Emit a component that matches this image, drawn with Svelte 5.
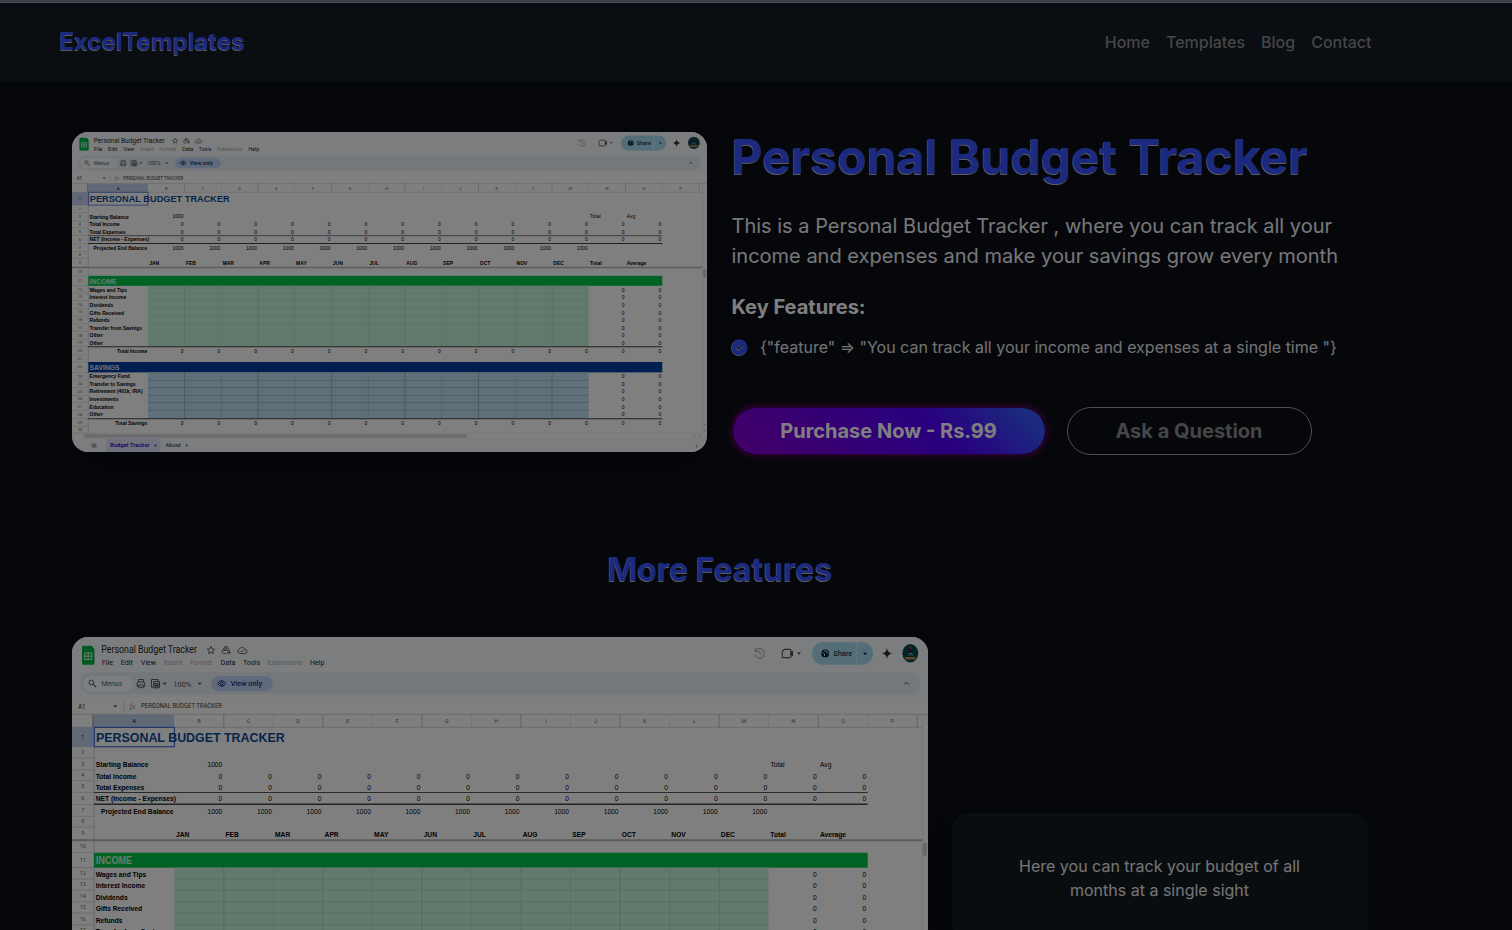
<script>
  const navItems = ['Home', 'Templates', 'Blog', 'Contact'];

  const colStart = 102.3;
  const colPitch = 49.53;
  const colX = (i) => colStart + i * colPitch;
  const letters = 'BCDEFGHIJKLMNOP'.split('');
  const months = ['JAN', 'FEB', 'MAR', 'APR', 'MAY', 'JUN', 'JUL', 'AUG', 'SEP', 'OCT', 'NOV', 'DEC', 'Total', 'Average'];
  const fourteen = Array.from({ length: 14 }, (_, i) => i);
  const twelve = fourteen.slice(0, 12);

  // bottom edge of every sheet row, starting with the column header
  const edges = [90.3, 109.7, 121, 133, 143.7, 155.3, 167.7, 179.3, 190, 202.8, 215.7, 230.6, 242, 253, 264.8, 276, 287.8, 299, 311, 322, 334.5, 345, 360.6, 372.5, 383.3, 395, 405.8, 417.5, 430, 441.5, 451.8];

  const labels = [
    ['Starting Balance', 127.3], ['Total Income', 139], ['Total Expenses', 150.5], ['NET (Income - Expenses)', 161],
    ['Wages and Tips', 237], ['Interest Income', 248.3], ['Dividends', 260], ['Gifts Received', 271.3], ['Refunds', 283],
    ['Transfer from Savings', 294.3], ['Other', 305.5], ['Other', 317],
    ['Emergency Fund', 366.5], ['Transfer to Savings', 378], ['Retirement (401k, IRA)', 389.5], ['Investments', 401],
    ['Education', 412.5], ['Other', 424]
  ];
  const rightLabels = [['Projected End Balance', 174.3], ['Total Income', 329], ['Total Savings', 436.5]];
  const zeroRows = [139, 150.5, 161, 329, 436.5];
  const sideRows = [237, 248.3, 260, 271.3, 283, 294.3, 305.5, 317, 366.5, 378, 389.5, 401, 412.5, 424];
  const menus = [
    ['File', 29.7, 11.3, 1], ['Edit', 48.7, 12.3, 1], ['View', 69, 15, 1], ['Insert', 91.5, 18.5, 0], ['Format', 118, 22, 0],
    ['Data', 148.5, 15, 1], ['Tools', 171, 17, 1], ['Extensions', 195.5, 34.5, 0], ['Help', 238, 14.5, 1]
  ];
  const carets = [[727, 16.5], [92.7, 46.7], [127.7, 46.7], [43.3, 69.3]];
  const tabCarets = [[112.5, 470.5, '#3a2bb0'], [154.5, 470.5, '#444746']];
</script>

{#snippet sheet()}
  <svg class="sheet" viewBox="0 0 856 480" preserveAspectRatio="none" role="img" aria-label="Personal Budget Tracker">
    <rect width="856" height="480" fill="#ffffff" />
    <rect width="856" height="60" fill="#f9fbfd" />

    <!-- title bar -->
    <path d="M11.5 8.7h8l3 4v13.5a1.5 1.5 0 0 1-1.5 1.5h-9.500a1.500 1.500 0 0 1-1.500-1.500v-16a1.500 1.500 0 0 1 1.500-1.500z" fill="#00b548" />
    <path d="M19.500 8.700l3 4h-3z" fill="#008a37" />
    <path d="M12.700 16h7v6.500h-7zM16.200 16v6.500M12.700 19.200h7" fill="none" stroke="#e6f5ea" stroke-width="1" />
    <text x="29.300" y="15.800" font-size="10" textLength="95.700" lengthAdjust="spacingAndGlyphs" class="ui dark">Personal Budget Tracker</text>
    {#each menus as [name, x, w, on]}
      <text {x} y="27.800" font-size="7" textLength={w} lengthAdjust="spacingAndGlyphs" class="ui" fill={on ? '#1f1f1f' : '#a9abad'}>{name}</text>
    {/each}
    <g fill="none" stroke="#555859" stroke-width=".9">
      <path d="M139 9.300l1.100 2.600 2.700.300-2.100 1.800.600 2.800-2.300-1.500-2.300 1.500.600-2.800-2.100-1.800 2.700-.300z" />
      <path d="M157.500 14.500v-1l-2.500-4h-2l-3 5 1.300 2h3M151.700 13.500l2-3 2 3zM157 13.500v4M155 15.500h4" />
      <path d="M168 16.500h5a2 2 0 0 0 0-4 3 3 0 0 0-5.500-.500 2.300 2.300 0 0 0 .500 4.500zM168.500 13.800l1.200 1.200 2.300-2.300" />
      <g stroke="#97999b"><path d="M683.800 14a4.500 5 0 1 1-.400 3.500M683.300 11v3.500h3M687.800 13.300v3.300l2.300 1.600" /></g>
      <path d="M712.300 12.300h5.200a1.500 1.500 0 0 1 1.500 1.500v5.400a1.500 1.500 0 0 1-1.500 1.500h-6.200a1 1 0 0 1-1-1v-5.400z" stroke-width="1.200" />
    </g>
    <path d="M719 15.500l1.500-1.500v5l-1.500-1.500z" fill="#444746" stroke="#444746" />
    <rect x="740" y="5.300" width="61" height="22.400" rx="11.200" fill="#a6dcf2" />
    <path d="M784.300 5.300v22.400" stroke="#d5eef9" stroke-width="1" />
    <circle cx="753.200" cy="16.400" r="3.900" fill="#001d35" />
    <path d="M750.500 15l2 2v2M753 12.800v1.600h2l.5 2 1 .5" stroke="#aadcf4" stroke-width="1" fill="none" />
    <text x="761.300" y="19" font-size="7" textLength="19" lengthAdjust="spacingAndGlyphs" class="ui medium" fill="#1b3348">Share</text>
    <path d="M791 15.700h4.200l-2.100 2.300z" fill="#001d35" />
    <path d="M815 11c.6 3.500 1.800 4.800 5.200 5.500-3.400.700-4.600 2-5.200 5.500-.600-3.500-1.800-4.800-5.200-5.500 3.400-.700 4.600-2 5.200-5.500z" fill="#303234" />
    <ellipse cx="838.300" cy="16.300" rx="7.900" ry="9.200" fill="#034a4a" />
    <path d="M832.500 20h11.600l-1 2.600h-9.600z" fill="#c08a45" />
    <path d="M836 11.500l2-1.500 2 1.500v4.500h-4z" fill="#2b1d55" />
    <circle cx="838.500" cy="11" r="1.200" fill="#c83a4a" />
    <path d="M837 19v-2.500h3v2.500" stroke="#b8c8c8" stroke-width=".7" fill="none" />

    <!-- toolbar -->
    <rect x="8" y="35.300" width="840" height="21.700" rx="10.800" fill="#e9f0f7" />
    <rect x="11.300" y="39" width="49.400" height="15.300" rx="7.600" fill="#fbfcfe" />
    <g fill="none" stroke="#505355" stroke-width=".95">
      <circle cx="19.300" cy="45.400" r="2.300" />
      <path d="M21 47.200l3 3" stroke-width="1.200" />
      <path d="M66.500 45v-2.500h5V45M66.500 49.500h-1.300V46a1 1 0 0 1 1-1h5.600a1 1 0 0 1 1 1v3.500h-1.300M66.800 48h4.500v2.700h-4.500z" />
      <path d="M81.500 50.300h-2V42.500h6.500v1.500M81.800 44.500h5.700v6.300h-5.700zM81.800 46.700h5.700M83.700 46.700v4M85.700 46.700v4M81.800 48.700h5.700" />
      <path d="M832 47.700l2.300-2.500 2.300 2.500" />
    </g>
    <text x="29.300" y="49" font-size="7" textLength="21" class="ui" fill="#5f6368">Menus</text>
    <text x="101.300" y="49.500" font-size="7.400" textLength="18" lengthAdjust="spacingAndGlyphs" class="ui" fill="#505355">100%</text>
    <rect x="139" y="39" width="61.700" height="15.300" rx="7.600" fill="#c2d5fa" />
    <path d="M145.700 46.500c2-3.600 6-3.600 8 0-2 3.600-6 3.600-8 0z" fill="none" stroke="#0b1d66" />
    <circle cx="149.700" cy="46.500" r="1.400" fill="none" stroke="#0b1d66" />
    <text x="158.700" y="49" font-size="7" textLength="31.300" lengthAdjust="spacingAndGlyphs" class="ui medium" fill="#1c2c5c">View only</text>

    <!-- formula bar -->
    <rect y="60.500" width="856" height="17" fill="#ffffff" />
    <text x="6.300" y="71.700" font-size="7" textLength="7" lengthAdjust="spacingAndGlyphs" class="ui" fill="#1f1f1f">A1</text>
    <path d="M51.700 65v9" stroke="#c7c7c7" stroke-width=".7" />
    <text x="57.500" y="72" font-size="8" font-style="italic" font-family="'Liberation Serif', serif" fill="#8e9092">fx</text>
    <text x="69" y="71.400" font-size="6.700" textLength="81" lengthAdjust="spacingAndGlyphs" class="ui" fill="#3c3e40">PERSONAL BUDGET TRACKER</text>
    {#each carets as [x, y]}
      <path d="M{x - 2} {y - 1}h4l-2 2.200z" fill="#444746" />
    {/each}

    <!-- column header -->
    <path d="M0 77.300H856M0 90.300H850" stroke="#c9cbcc" stroke-width=".8" />
    <rect x="22" y="77.500" width="80.300" height="12.800" fill="#c2d2ee" />
    <rect x="0" y="90.300" width="22" height="19.400" fill="#c2d2ee" />
    <rect x="20.300" y="77.500" width="1.700" height="12.800" fill="#b0b2b3" />
    <text x="62.300" y="86.400" font-size="5.800" class="ui medium mid" fill="#1c2c66">A</text>
    {#each letters as letter, i}
      <text x={colX(i) + colPitch / 2} y="86.400" font-size="5.800" class="ui mid" fill="#6a6e72">{letter}</text>
      <path d="M{colX(i + 1)} 77.500v12.800" stroke={i % 2 ? '#d2d4d5' : '#b9bbbd'} stroke-width={i % 2 ? 0.5 : 0.9} />
    {/each}

    <!-- row header -->
    <path d="M22 90.300V452" stroke="#c2c4c5" stroke-width=".8" />
    {#each edges.slice(1) as edge, i}
      <path d="M0 {edge}H22" stroke="#c9cbcc" stroke-width=".7" />
      <text x="10.700" y={(edge + edges[i]) / 2 + 1.800} font-size="5.300" class="ui mid" fill={i ? '#64686b' : '#1c2c66'}>{i + 1}</text>
    {/each}

    <!-- header block -->
    <rect x="22.400" y="90.400" width="80" height="19.300" fill="none" stroke="#4a6cd4" stroke-width="1.200" />
    <text x="24" y="105.300" font-size="13.600" textLength="188.700" lengthAdjust="spacingAndGlyphs" class="cell bold" fill="#0b4b96">PERSONAL BUDGET TRACKER</text>
    <text x="150.300" y="129.700" class="cell end">1000</text>
    <text x={colX(12) + 1.800} y="129.700" class="cell">Total</text>
    <text x={colX(13) + 1.800} y="129.700" class="cell">Avg</text>
    {#each twelve as i}
      <text x={colX(i + 1) - 1.500} y="176.700" class="cell end">1000</text>
    {/each}
    {#each months as month, i}
      <text x={colX(i) + 1.700} y="199.500" class="cell bold">{month}</text>
    {/each}
    <path d="M22 155.500H795.700" stroke="#555555" stroke-width="1.100" />
    <path d="M22 167.300H795.700" stroke="#444444" stroke-width="1.500" />
    <path d="M0 203.300H850" stroke="#b4b6b7" stroke-width="2" />

    <!-- income and savings blocks -->
    <rect x="22" y="215.700" width="773.700" height="15" fill="#00c64c" />
    <text x="23.700" y="227.300" font-size="10" textLength="36.500" lengthAdjust="spacingAndGlyphs" class="cell bold" fill="#d6f7e0">INCOME</text>
    <rect x="102.300" y="230.700" width="594.200" height="91.300" fill="#c4f5d6" />
    <rect x="22" y="345" width="773.700" height="15.600" fill="#003da0" />
    <text x="23.700" y="357" font-size="9.700" textLength="40.500" lengthAdjust="spacingAndGlyphs" class="cell bold" fill="#dfe9fa">SAVINGS</text>
    <rect x="102.300" y="360.600" width="594.200" height="69.400" fill="#c0e0f4" />
    {#each twelve.slice(1) as i}
      <path d="M{colX(i)} 230.700V322" stroke="#b4cdbc" stroke-width={i % 2 ? 0.9 : 0.5} />
      <path d="M{colX(i)} 360.600V430" stroke="#8398a6" stroke-width={i % 2 ? 0.9 : 0.4} />
    {/each}
    {#each edges.slice(12, 19) as y}
      <path d="M102.300 {y}H696.500" stroke="#b8d2c1" stroke-width=".8" />
    {/each}
    {#each edges.slice(23, 28) as y}
      <path d="M102.300 {y}H696.500" stroke="#94a6b2" stroke-width=".9" />
    {/each}
    <path d="M22 322H795.700M22 430H795.700" stroke="#444444" stroke-width="1.400" />

    {#each labels as [label, y]}
      <text x="23.700" y={y + 2.500} class="cell bold">{label}</text>
    {/each}
    {#each rightLabels as [label, y]}
      <text x="101.500" y={y + 2.500} class="cell bold end">{label}</text>
    {/each}
    {#each zeroRows as y}
      {#each fourteen as i}
        <text x={colX(i + 1) - 1.500} y={y + 2.500} class="cell end">0</text>
      {/each}
    {/each}
    {#each sideRows as y}
      <text x={colX(13) - 1.500} y={y + 2.500} class="cell end">0</text>
      <text x={colX(14) - 1.500} y={y + 2.500} class="cell end">0</text>
    {/each}

    <!-- scrollbars and sheet tabs -->
    <path d="M850.300 77.500V452" stroke="#e1e3e4" stroke-width=".8" />
    <rect x="850.700" y="205.500" width="4.300" height="13.500" rx="2" fill="#d0d2d5" />
    <path d="M0 451.800H850" stroke="#dcdedf" stroke-width=".7" />
    <rect x="16" y="453.500" width="517" height="5" rx="2.500" fill="#d3d5d7" />
    <path d="M839.500 454.500l-1.500 1.500 1.500 1.500M845.500 454.500l1.500 1.500-1.500 1.500M851.500 440.500l1.500-1.500 1.500 1.500M851.500 446.500l1.500 1.500 1.500-1.500" fill="none" stroke="#777a7c" stroke-width=".8" />
    <rect y="459.700" width="856" height="20.300" fill="#f9fbfd" />
    <path d="M26.500 468h6.500M26.500 470.300h6.500M26.500 472.600h6.500" stroke="#5c5f61" stroke-width="1" />
    <rect x="45.800" y="459.700" width="73.700" height="20.300" fill="#dfe4f7" />
    <text x="51.200" y="472.900" font-size="7.200" textLength="53.500" lengthAdjust="spacingAndGlyphs" class="ui bold" fill="#3c22c8">Budget Tracker</text>
    <text x="126" y="472.900" font-size="7.200" textLength="20.500" lengthAdjust="spacingAndGlyphs" class="ui medium" fill="#444746">About</text>
    {#each tabCarets as [x, y, fill]}
      <path d="M{x - 2.200} {y - 1.200}h4.400l-2.200 2.600z" {fill} />
    {/each}
    <path d="M843 469l-2 2.300 2 2.300" fill="none" stroke="#444746" stroke-width=".9" />
  </svg>
{/snippet}

<div class="page">
  <div class="edge"></div>
  <header>
    <div class="logo">ExcelTemplates</div>
    <nav>
      {#each navItems as item}
        <span>{item}</span>
      {/each}
    </nav>
  </header>

  <main>
    <section class="hero">
      <div class="shot small">{@render sheet()}</div>
      <div class="info">
        <h1>Personal Budget Tracker</h1>
        <p class="lead">This is a Personal Budget Tracker , where you can track all your income and expenses and make your savings grow every month</p>
        <h2>Key Features:</h2>
        <div class="feature">
          <svg width="17" height="17" viewBox="0 0 17 17">
            <circle cx="8" cy="9" r="8" fill="#a9abbc" />
            <circle cx="8.500" cy="8.300" r="8" fill="#3654ff" />
            <path d="M5.300 8.700l2.300 2.300 4.500-4.800" fill="none" stroke="#a9abbc" stroke-width="1.300" />
            <path d="M5.500 7.900l2.300 2.300 4.300-4.600" fill="none" stroke="#141a22" stroke-width="1" />
          </svg>
          <span>{'{"feature" => "You can track all your income and expenses at a single time "}'}</span>
        </div>
        <div class="actions">
          <button class="buy">Purchase Now - Rs.99</button>
          <button class="ask">Ask a Question</button>
        </div>
      </div>
    </section>

    <h2 class="more">More Features</h2>

    <section class="row">
      <div class="shot large">{@render sheet()}</div>
      <div class="card">Here you can track your budget of all months at a single sight</div>
    </section>
  </main>
</div>
<div class="backdrop"></div>

<style>
  :global(body) {
    margin: 0;
    background: #06070b;
    overflow: hidden;
  }
  .page {
    height: 930px;
    overflow: hidden;
    background: #0c0e16;
    color: #fff;
    font-family: Inter, sans-serif;
    font-size: 16px;
  }
  .backdrop {
    position: fixed;
    inset: 0;
    background: rgba(0, 0, 0, 0.5);
    pointer-events: none;
  }
  .edge {
    height: 2px;
    background: #7a7890;
    border-bottom: 1px solid #9a9a9a;
  }
  header {
    height: 78px;
    box-sizing: border-box;
    padding: 0 140.500px 0 59.500px;
    display: flex;
    align-items: center;
    justify-content: space-between;
    background: #141a22;
  }
  .logo,
  h1,
  .more {
    color: #3654ff;
    font-weight: 700;
    text-shadow: -0.500px 1px 0 #b4b6c0;
  }
  .logo {
    padding-bottom: 2px;
    font-size: 24px;
  }
  nav {
    display: flex;
    gap: 16px;
    font-weight: 500;
    color: #8a8c90;
  }
  main {
    width: 1296px;
    margin-left: 72px;
    padding-top: 51px;
  }
  .hero {
    display: flex;
    gap: 24.500px;
    height: 323px;
  }
  .shot {
    flex: none;
    overflow: hidden;
    border-radius: 16px;
    box-shadow: 0 16px 48px rgba(0, 0, 0, 0.3);
  }
  .small {
    width: 635px;
    height: 320px;
  }
  .large {
    width: 856px;
    height: 480px;
  }
  .sheet {
    display: block;
    width: 100%;
    height: 100%;
  }
  .ui {
    font-family: Roboto, sans-serif;
  }
  .dark {
    fill: #1f1f1f;
  }
  .medium {
    font-weight: 500;
  }
  .mid {
    text-anchor: middle;
  }
  .cell {
    font-family: 'Liberation Sans', sans-serif;
  }
  .cell:not([font-size]) {
    font-size: 6.700px;
  }
  .bold {
    font-weight: 700;
  }
  .end {
    text-anchor: end;
  }
  .info {
    flex: 1;
  }
  h1 {
    margin: -4px 0 0;
    font-size: 48px;
    line-height: 58px;
  }
  .lead {
    margin: 25px 0 0;
    font-size: 20px;
    line-height: 30px;
    color: #eceef0;
  }
  .hero h2 {
    margin: 24px 0 0;
    font-size: 20px;
    font-weight: 700;
    line-height: 24px;
  }
  .feature {
    display: flex;
    align-items: center;
    gap: 12.500px;
    height: 24px;
    margin: 16px 0 0 -1px;
    white-space: nowrap;
    color: #e4e6e8;
  }
  .actions {
    display: flex;
    gap: 21px;
    margin-top: 48px;
  }
  button {
    box-sizing: border-box;
    height: 48px;
    padding: 0;
    border-radius: 24px;
    font: 700 20px/24px Inter, sans-serif;
  }
  .buy {
    width: 314px;
    border: 1px solid #4a0068;
    color: #fff;
    background: linear-gradient(45deg, #8600d0, #5200ff 65%, #3654ff 92%) padding-box;
    box-shadow: 0 0 7px #90008a;
  }
  .ask {
    width: 245px;
    border: 1px solid #9a9da0;
    color: #8a8c90;
    background: none;
  }
  .more {
    margin: 95px 0 0;
    font-size: 32px;
    line-height: 40px;
    text-align: center;
  }
  .row {
    display: flex;
    align-items: center;
    gap: 24px;
    margin-top: 47px;
  }
  .card {
    flex: 1;
    box-sizing: border-box;
    height: 128px;
    padding: 41px 57px 0 56px;
    border-radius: 16px;
    background: #141a1e;
    box-shadow: 0 4px 16px rgba(0, 0, 0, 0.3);
    line-height: 24px;
    text-align: center;
    color: #e8eaec;
  }
</style>
